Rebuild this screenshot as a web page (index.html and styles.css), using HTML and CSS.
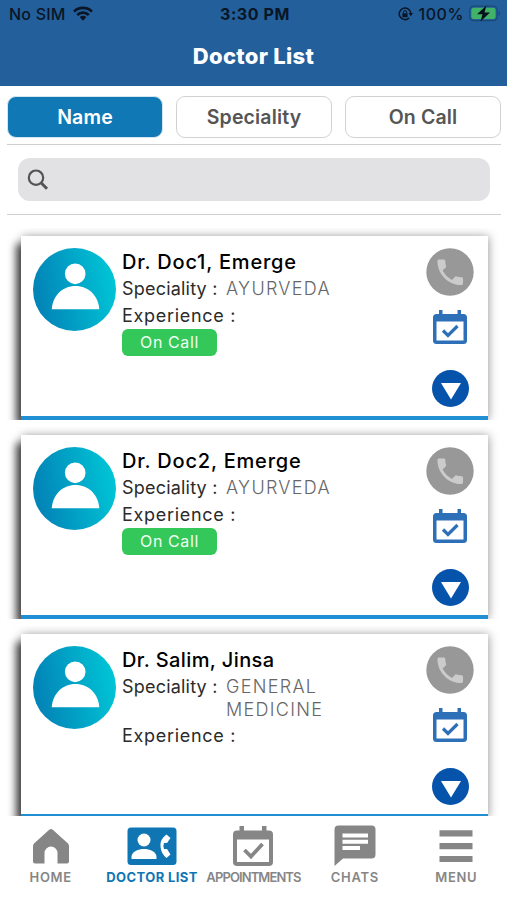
FILE: index.html
```html
<!DOCTYPE html>
<html lang="en">
<head>
    <meta charset="UTF-8">
    <title>Doctor List</title>
    <link rel="stylesheet" href="styles.css">
</head>
<body>

<!-- shared icons -->
<svg class="sprite" width="0" height="0">
    <defs>
        <linearGradient id="avatarFill" x1="0" y1=".2" x2="1" y2="0">
            <stop offset="0" stop-color="#0286b8"/>
            <stop offset="1" stop-color="#00cbd9"/>
        </linearGradient>
    </defs>
    <symbol id="user" viewBox="0 0 82 82">
        <circle cx="41" cy="41" r="41" fill="url(#avatarFill)"/>
        <circle cx="41.700" cy="25.500" r="10.200" fill="#fff"/>
        <path d="M18.500 60.500C19.500 47 29 37.500 42 37.500S64.500 47 65.500 60.500z" fill="#fff"/>
    </symbol>
    <symbol id="phone" viewBox="0 0 48 48">
        <circle cx="24" cy="24" r="23.700" fill="#989898"/>
        <path transform="translate(7.200 7.200) scale(1.420)" fill="#cbcbcb" d="M6.620 10.790c1.440 2.830 3.760 5.140 6.590 6.590l2.200-2.200c.27-.27.67-.36 1.020-.24 1.120.37 2.330.57 3.570.57.55 0 1 .45 1 1V20c0 .55-.45 1-1 1-9.390 0-17-7.610-17-17 0-.55.45-1 1-1h3.500c.55 0 1 .45 1 1 0 1.250.2 2.450.57 3.570.11.35.03.74-.25 1.020l-2.200 2.200z"/>
    </symbol>
    <symbol id="calendar" viewBox="0 0 34 34">
        <path fill="currentColor" fill-rule="evenodd" d="M6 0h3.500v4h15V0H28v4h2.500a3.500 3.500 0 0 1 3.500 3.500v23a3.500 3.500 0 0 1-3.500 3.500h-27A3.500 3.500 0 0 1 0 30.500v-23A3.500 3.500 0 0 1 3.500 4H6zM3.500 11.500v19h27v-19z"/>
        <path fill="none" stroke="currentColor" stroke-width="3.200" d="M10 20.500l5 5 9.500-9.500"/>
    </symbol>
    <symbol id="down" viewBox="0 0 37 37">
        <circle cx="18.500" cy="18.500" r="18.500" fill="#0653ab"/>
        <path d="M9 13h20L19 29.500z" fill="#fff"/>
    </symbol>
</svg>

<div class="app">
    <div class="header">
        <div class="status">
            <div class="status-left">
                <span>No SIM</span>
                <svg width="20" height="15" viewBox="0 0 20 15" fill="none" stroke="#0a1525" stroke-width="2.600">
                    <path d="M1 5.600a12.800 12.800 0 0 1 18 0M4.200 9a8.200 8.200 0 0 1 11.600 0"/>
                    <path d="M6.700 11.200a4.700 4.700 0 0 1 6.600 0L10 14.700z" fill="#0a1525" stroke="none"/>
                </svg>
            </div>
            <div class="status-time">3:30 PM</div>
            <div class="status-right">
                <svg width="15" height="14" viewBox="0 0 15 14">
                    <path d="M12.800 6a5.800 5.800 0 1 0-1.700 5" fill="none" stroke="#0a1525" stroke-width="1.500"/>
                    <path d="M10.600 6h4.400l-2.200 3.300z" fill="#0a1525"/>
                    <path d="M4.400 6.300h5.200v3.900H4.400z" fill="#0a1525"/>
                    <path d="M5.400 6.500V5.200a1.600 1.600 0 0 1 3.200 0v1.300" fill="none" stroke="#0a1525"/>
                </svg>
                <span>100%</span>
                <svg width="32" height="17" viewBox="0 0 32 17">
                    <rect x=".7" y="1.200" width="27.500" height="14.500" rx="4" fill="none" stroke="#1c4a78" stroke-width="1.200"/>
                    <rect x="2.300" y="2.800" width="24.300" height="11.300" rx="2.500" fill="#40b368"/>
                    <path d="M29.600 6.300c2 .7 2 3.700 0 4.400z" fill="#1c4a78"/>
                    <path d="M17.500.5L8 9.300h5.500L11.500 16.500 21 7.500h-5.500z" fill="#06101a"/>
                </svg>
            </div>
        </div>
        <h1 class="title">Doctor List</h1>
    </div>

    <div class="tabs">
        <div class="tab selected">Name</div>
        <div class="tab">Speciality</div>
        <div class="tab">On Call</div>
    </div>

    <div class="search-wrap">
        <div class="search">
            <svg width="22" height="22" viewBox="0 0 22 22" fill="none" stroke="#545456">
                <circle cx="9" cy="8.700" r="7.200" stroke-width="2.200"/>
                <path d="M14 13.800l6 6" stroke-width="3"/>
            </svg>
        </div>
    </div>

    <div class="list">
        <div class="card">
            <svg class="avatar"><use href="#user"/></svg>
            <div class="info">
                <div class="name">Dr. Doc1, Emerge</div>
                <div class="row"><span class="label">Speciality :</span><span class="value">AYURVEDA</span></div>
                <div class="row"><span class="label experience">Experience :</span></div>
                <div class="badge">On Call</div>
            </div>
            <div class="actions">
                <svg class="phone"><use href="#phone"/></svg>
                <svg class="calendar"><use href="#calendar"/></svg>
                <svg class="down"><use href="#down"/></svg>
            </div>
        </div>
        <div class="card">
            <svg class="avatar"><use href="#user"/></svg>
            <div class="info">
                <div class="name">Dr. Doc2, Emerge</div>
                <div class="row"><span class="label">Speciality :</span><span class="value">AYURVEDA</span></div>
                <div class="row"><span class="label experience">Experience :</span></div>
                <div class="badge">On Call</div>
            </div>
            <div class="actions">
                <svg class="phone"><use href="#phone"/></svg>
                <svg class="calendar"><use href="#calendar"/></svg>
                <svg class="down"><use href="#down"/></svg>
            </div>
        </div>
        <div class="card">
            <svg class="avatar"><use href="#user"/></svg>
            <div class="info">
                <div class="name long">Dr. Salim, Jinsa</div>
                <div class="row"><span class="label">Speciality :</span><span class="value">GENERAL<br>MEDICINE</span></div>
                <div class="row"><span class="label experience">Experience :</span></div>
            </div>
            <div class="actions">
                <svg class="phone"><use href="#phone"/></svg>
                <svg class="calendar"><use href="#calendar"/></svg>
                <svg class="down"><use href="#down"/></svg>
            </div>
        </div>
    </div>

    <div class="nav">
        <div class="nav-item">
            <svg width="38" height="42" viewBox="0 0 38 42">
                <path fill="currentColor" d="M17.500 4.500q1.500-1 3 0L36 18.500q1 1 1 2.500v15.500a2 2 0 0 1-2 2H25.500V28a6.500 6.500 0 0 0-13 0v10.500H3a2 2 0 0 1-2-2V21q0-1.500 1-2.500z"/>
            </svg>
            <span class="home">HOME</span>
        </div>
        <div class="nav-item active">
            <svg width="50" height="42" viewBox="0 0 50 42">
                <rect x=".5" y="2.500" width="49" height="37.500" rx="3.500" fill="currentColor"/>
                <circle cx="17" cy="15" r="6.500" fill="#fff"/>
                <path d="M4.500 34v-2c0-5.500 7-8 12.500-8s12.500 2.500 12.500 8v2z" fill="#fff"/>
                <path d="M39.500 9.500q-7 5-6 12 .5 7 6 11.500l4-3.500-3.500-5.500h-3q-1.300-3 0-6h3l3.500-5z" fill="#fff"/>
            </svg>
            <span class="doctors">DOCTOR LIST</span>
        </div>
        <div class="nav-item">
            <svg width="40" height="42" viewBox="0 0 40 42">
                <path fill="currentColor" fill-rule="evenodd" d="M6.500 1H11v4.500h18V1h4.500v4.500H36a4 4 0 0 1 4 4V37a4 4 0 0 1-4 4H4a4 4 0 0 1-4-4V9.500a4 4 0 0 1 4-4h2.500zM4 14.500V37h32V14.500z"/>
                <path fill="none" stroke="currentColor" stroke-width="3.800" d="M11.500 25l6.500 6.500L29.500 19"/>
            </svg>
            <span class="appointments">APPOINTMENTS</span>
        </div>
        <div class="nav-item">
            <svg width="42" height="42" viewBox="0 0 42 42">
                <path fill="currentColor" d="M4.500.5h33a4 4 0 0 1 4 4v25a4 4 0 0 1-4 4H9L.5 41V4.500a4 4 0 0 1 4-4z"/>
                <path stroke="#fff" stroke-width="4" d="M8.500 10.500H34M8.500 16.800H34M8.500 23H26"/>
            </svg>
            <span class="chats">CHATS</span>
        </div>
        <div class="nav-item">
            <svg width="34" height="42" viewBox="0 0 34 42">
                <path stroke="currentColor" stroke-width="6.200" d="M.5 8.300h33M.5 21.200h33M.5 34h33"/>
            </svg>
            <span class="menu">MENU</span>
        </div>
    </div>
</div>

</body>
</html>
```

FILE: styles.css
```css
* {
    margin: 0;
    padding: 0;
    box-sizing: border-box;
}

body {
    background: #fff;
    font-family: Inter, "Liberation Sans", sans-serif;
}

svg {
    display: block;
    flex: none;
}

.sprite {
    position: absolute;
}

.app {
    width: 507px;
    height: 900px;
    display: flex;
    flex-direction: column;
    overflow: hidden;
}

.header {
    height: 86px;
    background: #225f9b;
    flex: none;
}

.status {
    height: 27px;
    padding: 0 6px 0 9px;
    display: grid;
    grid-template-columns: 1fr auto 1fr;
    align-items: center;
    font-size: 16px;
    font-weight: 500;
    color: #0a1525;
}

.status-left {
    display: flex;
    align-items: center;
    gap: 7px;
    letter-spacing: 0.2px;
}

.status-time {
    font-weight: 700;
    letter-spacing: 0.6px;
}

.status-right {
    display: flex;
    align-items: center;
    justify-content: flex-end;
    gap: 5px;
    letter-spacing: 0.6px;
}

.title {
    line-height: 58px;
    text-align: center;
    font-size: 22px;
    font-weight: 800;
    letter-spacing: 0.3px;
    color: #fff;
}

.tabs {
    display: grid;
    grid-template-columns: repeat(3, 1fr);
    gap: 13px;
    margin: 0 6px 0 7px;
    padding: 10px 0 6px;
    border-bottom: 1px solid #cfcfcf;
    flex: none;
}

.tab {
    height: 42px;
    line-height: 41px;
    border: 1px solid #d2d2d2;
    border-radius: 9px;
    text-align: center;
    font-size: 19.500px;
    font-weight: 600;
    letter-spacing: 0.15px;
    color: #555;
}

.tab.selected {
    background: #0f78b5;
    border-color: #d5e4ee;
    color: #fff;
}

.search-wrap {
    margin: 0 6px 0 7px;
    padding: 13px 11px;
    height: 70px;
    border-bottom: 1px solid #cfcfcf;
    flex: none;
}

.search {
    height: 43px;
    padding-left: 9px;
    display: flex;
    align-items: center;
    background: #e2e2e4;
    border-radius: 12px;
}

.list {
    flex: 1;
    min-height: 0;
    padding: 21px 19px 0 21px;
    overflow: hidden;
}

.card {
    height: 184px;
    margin-bottom: 15px;
    padding: 12px 14px 0 12px;
    display: flex;
    background: #fff;
    border-bottom: 4px solid #208fd4;
    box-shadow: -6px 7px 8px -1px rgba(0, 0, 0, 0.7), 1px 0 9px rgba(0, 0, 0, 0.35);
    clip-path: inset(-8px -14px 0 -14px); /* no shadow under the blue line */
}

.avatar {
    width: 83px;
    height: 83px;
}

.info {
    flex: 1;
    margin-left: 6px;
}

.name {
    height: 28px;
    line-height: 28px;
    font-size: 20px;
    font-weight: 500;
    letter-spacing: 0.8px;
    color: #000;
    white-space: nowrap;
}

.name.long {
    letter-spacing: 0.4px;
}

.row {
    display: flex;
    padding: 2px 0;
    line-height: 22.500px;
    font-size: 18px;
}

.label {
    width: 104px;
    color: #2b2b2b;
    letter-spacing: 0.2px;
    white-space: nowrap;
}

.experience {
    letter-spacing: 0.7px;
}

.value {
    color: #666;
    font-weight: 300;
    letter-spacing: 1.3px;
}

.badge {
    width: 95px;
    height: 27px;
    line-height: 26px;
    border-radius: 6px;
    background: #34c759;
    color: #effff2;
    text-align: center;
    font-size: 16px;
    letter-spacing: 0.6px;
}

.actions {
    display: flex;
    flex-direction: column;
    align-items: center;
}

.phone {
    width: 48px;
    height: 48px;
}

.calendar {
    width: 34px;
    height: 34px;
    margin: 14px 0 26px;
    color: #2e70b8;
}

.down {
    width: 37px;
    height: 37px;
}

.nav {
    height: 84px;
    padding-top: 9px;
    display: grid;
    grid-template-columns: repeat(5, 1fr);
    flex: none;
    background: #fff;
}

.nav-item {
    display: flex;
    flex-direction: column;
    align-items: center;
    color: #868686;
    font-size: 13px;
    font-weight: 600;
    line-height: 20px;
    white-space: nowrap;
}

.nav-item.active {
    color: #0f76b3;
    font-weight: 700;
}

.home {
    letter-spacing: 0.7px;
}

.doctors {
    letter-spacing: 0.4px;
}

.appointments {
    letter-spacing: -0.9px;
}

.chats,
.menu {
    letter-spacing: 0.7px;
}
```
